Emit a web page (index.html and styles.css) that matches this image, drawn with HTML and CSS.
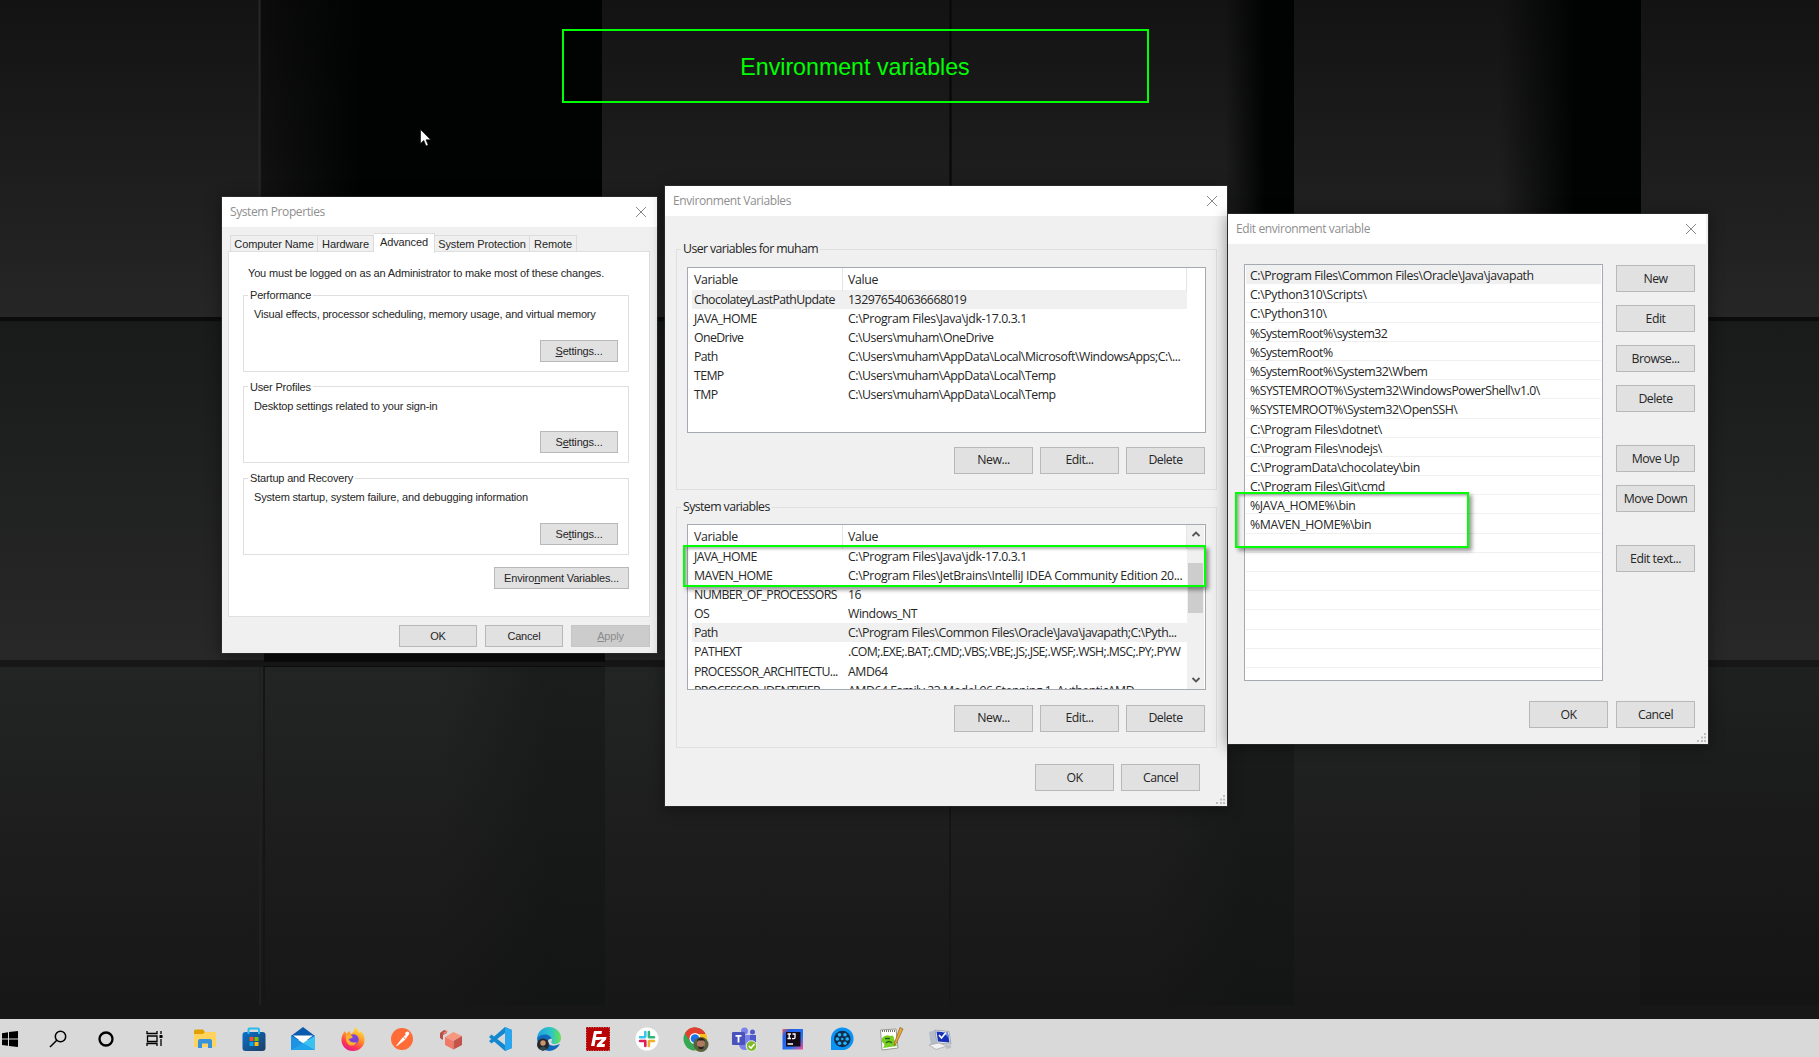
FILE: index.html
```html
<!DOCTYPE html>
<html lang="en">
<head>
<meta charset="utf-8">
<title>Environment variables</title>
<link rel="stylesheet" href="styles.css">
</head>
<body>
<div class="desktop">
<svg class="wallpaper" viewBox="0 0 1819 1019" preserveAspectRatio="none">
  <defs>
    <linearGradient id="top" x1="0" y1="0" x2="0" y2="1"><stop offset="0" stop-color="#131313"/><stop offset="1" stop-color="#262626"/></linearGradient>
    <linearGradient id="mid" x1="0" y1="0" x2="0" y2="1"><stop offset="0" stop-color="#191a1a"/><stop offset="1" stop-color="#282828"/></linearGradient>
    <linearGradient id="low" x1="0" y1="0" x2="0" y2="1"><stop offset="0" stop-color="#232424"/><stop offset=".6" stop-color="#1c1c1c"/><stop offset="1" stop-color="#171717"/></linearGradient>
    <linearGradient id="fade"><stop offset="0" stop-color="#010202" stop-opacity="0"/><stop offset="1" stop-color="#010202"/></linearGradient>
    <linearGradient id="soft"><stop offset="0" stop-color="#0c0f0e" stop-opacity="0"/><stop offset=".65" stop-color="#0c0f0e" stop-opacity=".6"/><stop offset="1" stop-color="#0e1010" stop-opacity=".65"/></linearGradient>
  </defs>
  <rect width="1819" height="1019" fill="#171717"/>
  <rect width="1819" height="318" fill="url(#top)"/>
  <rect y="322" width="1819" height="338" fill="url(#mid)"/>
  <rect y="667" width="1819" height="338" fill="url(#low)"/>
  <rect x="261" width="341" height="318" fill="#000" opacity=".4"/>
  <rect x="261" width="100" height="318" fill="url(#fade)"/>
  <rect x="361" width="241" height="318" fill="#010202"/>
  <rect x="1225" width="40" height="318" fill="url(#fade)"/>
  <rect x="1265" width="29" height="318" fill="#010202"/>
  <rect x="1500" width="75" height="318" fill="url(#fade)"/>
  <rect x="1575" width="66" height="318" fill="#010202"/>
  <rect x="264" y="653" width="341" height="14" fill="#0c0c0c"/>
  <rect x="440" y="667" width="165" height="338" fill="url(#soft)" opacity=".6"/>
  <rect x="1150" y="667" width="144" height="338" fill="url(#soft)" opacity=".6"/>
  <rect x="1640" y="667" width="179" height="338" fill="#000" opacity=".1"/>
  <rect y="317" width="1819" height="4" fill="#0c0c0c"/>
  <rect y="662" width="1819" height="4" fill="#171717"/>
  <path d="M950.500 0V318" stroke="#070707" stroke-width="2"/>
  <path d="M259.500 0V318" stroke="#262626" stroke-width="2"/>
  <path d="M264 667V1005M950 667V1005" stroke="#151515" stroke-width="2"/>
  <path d="M260 667V1005" stroke="#202020" stroke-width="2"/>
</svg>

<div class="banner">Environment variables</div>

<section class="window sysprops">
  <header class="titlebar"><span>System Properties</span><svg class="close" viewBox="0 0 12 12"><path d="M1 1L11 11M11 1L1 11"/></svg></header>
  <div class="body">
    <nav class="tabs"><span class="t1">Computer Name</span><span class="t2">Hardware</span><span class="t3 active">Advanced</span><span class="t4">System Protection</span><span class="t5">Remote</span></nav>
    <div class="panel">
      <p class="note">You must be logged on as an Administrator to make most of these changes.</p>
      <fieldset><legend>Performance</legend><p>Visual effects, processor scheduling, memory usage, and virtual memory</p><button><span><u>S</u>ettings...</span></button></fieldset>
      <fieldset><legend>User Profiles</legend><p>Desktop settings related to your sign-in</p><button><span>S<u>e</u>ttings...</span></button></fieldset>
      <fieldset><legend>Startup and Recovery</legend><p>System startup, system failure, and debugging information</p><button><span>Se<u>t</u>tings...</span></button></fieldset>
      <button class="env"><span>Enviro<u>n</u>ment Variables...</span></button>
    </div>
    <div class="actions"><button>OK</button><button>Cancel</button><button class="off"><span><u>A</u>pply</span></button></div>
  </div>
</section>

<section class="window envvars">
  <header class="titlebar"><span>Environment Variables</span><svg class="close" viewBox="0 0 12 12"><path d="M1 1L11 11M11 1L1 11"/></svg></header>
  <div class="body">
    <fieldset>
      <legend>User variables for muham</legend>
      <div class="list">
        <div class="rows">
          <div class="row head"><span>Variable</span><span>Value</span></div>
          <div class="row sel"><span>ChocolateyLastPathUpdate</span><span>132976540636668019</span></div>
          <div class="row"><span>JAVA_HOME</span><span class="wide">C:\Program Files\Java\jdk-17.0.3.1</span></div>
          <div class="row"><span>OneDrive</span><span>C:\Users\muham\OneDrive</span></div>
          <div class="row"><span>Path</span><span>C:\Users\muham\AppData\Local\Microsoft\WindowsApps;C:\...</span></div>
          <div class="row"><span>TEMP</span><span>C:\Users\muham\AppData\Local\Temp</span></div>
          <div class="row"><span>TMP</span><span>C:\Users\muham\AppData\Local\Temp</span></div>
        </div>
      </div>
      <div class="actions"><button>New...</button><button>Edit...</button><button>Delete</button></div>
    </fieldset>
    <fieldset class="system">
      <legend>System variables</legend>
      <div class="list">
        <div class="rows">
          <div class="row head"><span>Variable</span><span>Value</span></div>
          <div class="row"><span>JAVA_HOME</span><span class="wide">C:\Program Files\Java\jdk-17.0.3.1</span></div>
          <div class="row"><span>MAVEN_HOME</span><span class="wide">C:\Program Files\JetBrains\IntelliJ IDEA Community Edition 20...</span></div>
          <div class="row"><span>NUMBER_OF_PROCESSORS</span><span>16</span></div>
          <div class="row"><span>OS</span><span>Windows_NT</span></div>
          <div class="row sel"><span>Path</span><span>C:\Program Files\Common Files\Oracle\Java\javapath;C:\Pyth...</span></div>
          <div class="row"><span>PATHEXT</span><span class="tight">.COM;.EXE;.BAT;.CMD;.VBS;.VBE;.JS;.JSE;.WSF;.WSH;.MSC;.PY;.PYW</span></div>
          <div class="row"><span>PROCESSOR_ARCHITECTU...</span><span>AMD64</span></div>
          <div class="row"><span>PROCESSOR_IDENTIFIER</span><span>AMD64 Family 23 Model 96 Stepping 1, AuthenticAMD</span></div>
        </div>
        <div class="scroll">
          <svg viewBox="0 0 10 6"><path d="M1.500 5L5 1.500L8.500 5"/></svg>
          <i></i>
          <svg viewBox="0 0 10 6"><path d="M1.500 1L5 4.500L8.500 1"/></svg>
        </div>
      </div>
      <div class="actions"><button>New...</button><button>Edit...</button><button>Delete</button></div>
    </fieldset>
    <div class="actions final"><button>OK</button><button>Cancel</button></div>
  </div>
  <svg class="grip" viewBox="0 0 10 10"><path d="M7 0h2v2h-2zM4 3.500h2v2h-2zM7 3.500h2v2h-2zM0 7h2v2h-2zM4 7h2v2h-2zM7 7h2v2h-2z"/></svg>
</section>

<section class="window editvar">
  <header class="titlebar"><span>Edit environment variable</span><svg class="close" viewBox="0 0 12 12"><path d="M1 1L11 11M11 1L1 11"/></svg></header>
  <div class="body">
    <div class="columns">
      <div class="paths">
        <div class="sel">C:\Program Files\Common Files\Oracle\Java\javapath</div>
        <div>C:\Python310\Scripts\</div>
        <div>C:\Python310\</div>
        <div class="tight">%SystemRoot%\system32</div>
        <div class="tight">%SystemRoot%</div>
        <div class="tight">%SystemRoot%\System32\Wbem</div>
        <div class="tight">%SYSTEMROOT%\System32\WindowsPowerShell\v1.0\</div>
        <div class="tight">%SYSTEMROOT%\System32\OpenSSH\</div>
        <div>C:\Program Files\dotnet\</div>
        <div>C:\Program Files\nodejs\</div>
        <div>C:\ProgramData\chocolatey\bin</div>
        <div>C:\Program Files\Git\cmd</div>
        <div>%JAVA_HOME%\bin</div>
        <div>%MAVEN_HOME%\bin</div>
        <div></div><div></div><div></div><div></div><div></div><div></div><div></div>
      </div>
      <div class="side"><button>New</button><button>Edit</button><button>Browse...</button><button>Delete</button><button class="gap">Move Up</button><button>Move Down</button><button class="gap">Edit text...</button></div>
    </div>
    <div class="actions"><button>OK</button><button>Cancel</button></div>
  </div>
  <svg class="grip" viewBox="0 0 10 10"><path d="M7 0h2v2h-2zM4 3.500h2v2h-2zM7 3.500h2v2h-2zM0 7h2v2h-2zM4 7h2v2h-2zM7 7h2v2h-2z"/></svg>
</section>

<div class="mark mark-vars"></div>
<div class="mark mark-paths"></div>
<svg class="cursor" viewBox="0 0 12 18"><path d="M.5 .5V14.500L3.800 11.400L6 17L8.200 16L6 10.800H10.700Z" fill="#fff" stroke="#000" stroke-width=".6"/></svg>
</div>

<footer class="taskbar">
  <svg class="start" viewBox="0 0 26 26"><path d="M5 7.200L11 6.300V12.500H5zM12 6.100L21 5V12.500H12zM5 13.500H11V19.800L5 18.900zM12 13.500H21V21L12 19.900z"/></svg>
  <svg viewBox="0 0 26 26"><g fill="none" stroke="#000" stroke-width="1.500"><circle cx="15.500" cy="10.500" r="5.200"/><path d="M11.800 14.200L5 21"/></g></svg>
  <svg viewBox="0 0 26 26"><circle cx="13" cy="13" r="6.500" fill="none" stroke="#000" stroke-width="2.300"/></svg>
  <svg viewBox="0 0 26 26"><g fill="none" stroke="#000" stroke-width="1.300"><path d="M5 5V7.500H15V5M5 20V17.500H15V20M5.500 10H15V15.500H5.500zM19 5V8M19 13V20"/></g><path d="M17.500 9h3v3h-3z"/></svg>
  <svg viewBox="0 0 26 26"><path d="M2 5q0-1.500 1.500-1.500H11l2 2.500v5H2z" fill="#e0a100"/><path d="M2 8H11L13 6H24V21H2z" fill="#ffd35c"/><path d="M6 22V15q0-2 2-2H18q2 0 2 2V22H16V17.500H10V22z" fill="#3794dc"/></svg>
  <svg viewBox="0 0 26 26"><defs><linearGradient id="st" x1="0" y1="0" x2="1" y2="1"><stop stop-color="#0872ca"/><stop offset="1" stop-color="#1e3c64"/></linearGradient></defs><rect x="1.500" y="6" width="23" height="19" rx="3" fill="url(#st)"/><path d="M7.500 8V3.500Q7.500 2.500 8.500 2.500H17Q18 2.500 18 3.500V8" fill="none" stroke="#28bbef" stroke-width="2"/><path d="M8.500 11H12.500V15H8.500z" fill="#f35325"/><path d="M13.500 11H17.500V15H13.500z" fill="#81bc06"/><path d="M8.500 16H12.500V20H8.500z" fill="#05a6f0"/><path d="M13.500 16H17.500V20H13.500z" fill="#ffba08"/></svg>
  <svg viewBox="0 0 26 26"><path d="M1 10L13 1L25 10V14H1z" fill="#0a5aad"/><path d="M1 9.500L13 17L25 24H1z" fill="#1e93e4"/><path d="M13 17L25 9.500V24z" fill="#39c1f2"/><path d="M13 17L25 24H1z" fill="#22a4ea"/><path d="M3 9.500L13 17L23 9.500z" fill="#fff"/></svg>
  <svg viewBox="0 0 26 26"><defs><linearGradient id="ff" x1=".8" y1="0" x2=".3" y2="1"><stop stop-color="#fff04a"/><stop offset=".45" stop-color="#ff9225"/><stop offset=".75" stop-color="#ff3b50"/><stop offset="1" stop-color="#e3168b"/></linearGradient></defs><path d="M13 25C6 25 1.500 20 1.500 14C1.500 10 3 7 5 5L6.500 8Q8 5.500 10 5L10.500 8Q14 7 15 1Q18 3 19.500 7L21 5Q25 9 24.500 14.500C24.500 20 19.500 25 13 25z" fill="url(#ff)"/><circle cx="13.500" cy="13.500" r="5.200" fill="#7a45d6"/><path d="M6 9Q10 7.500 13 11Q11 13 8.500 13Q11 18 17 16Q14 21 9 19Q5 16 6 9z" fill="#ffb02e"/></svg>
  <svg viewBox="0 0 26 26"><circle cx="13" cy="13" r="11" fill="#ff6c37"/><path d="M7 20L14 11L16.500 13.500L8 20zM14.500 10.500L18 8L19 9.500L16.800 13z" fill="#fff"/><circle cx="18.300" cy="7.500" r="2" fill="#fff"/></svg>
  <svg viewBox="0 0 26 26"><path d="M2 7L6 4L9 5V7L5 9V14L2 12z" fill="#b85045"/><path d="M5 7L9.500 4.500V6L6 8z" fill="#f48c75"/><path d="M7 11L15.500 6L24 10L15.500 15z" fill="#f7977f"/><path d="M7 11L15.500 15V23.500L7 19z" fill="#f07a67"/><path d="M24 10L15.500 15V23.500L24 19z" fill="#c4544b"/></svg>
  <svg viewBox="0 0 26 26"><path d="M18 1L25 4V22L18 25L2 11L4.500 8.500L18 19V7L4.500 17.500L2 15z" fill="#1388cf"/><path d="M18 1L25 4V22L18 25z" fill="#2aa6ee"/></svg>
  <svg viewBox="0 0 26 26"><defs><linearGradient id="ed"><stop stop-color="#1d9fe5"/><stop offset=".6" stop-color="#2dc7c5"/><stop offset="1" stop-color="#6be04c"/></linearGradient></defs><path d="M1 12C2 5 7 1 13 1C21 1 25 7 25 12C25 16 22 18 18.500 18C15 18 15 16 16 14C16 9 8 7 1 12z" fill="url(#ed)"/><path d="M1 12C7 6 15 9 16 13C14 12 11 14 12 17Q15 22 24 18Q20 25 13 25Q2 24 1 12z" fill="#1269bb"/><circle cx="7" cy="18.500" r="6" fill="#25282a"/><circle cx="7" cy="17" r="2.700" fill="#c8946e"/><path d="M3 23Q7 18 11 23L7 25z" fill="#334a50"/></svg>
  <svg viewBox="0 0 26 26"><rect x="1.500" y="1.500" width="23" height="23" fill="#b90404" stroke="#a00" stroke-dasharray="1.500 1"/><path d="M6 20L9 5H17L16.500 8H11.500L11 11H15L14.500 14H10.500L9.500 20zM14 11H21.500L21 13.500L16.500 18H20L19.500 21H11.500L12 18.500L16.800 13.500H13.500z" fill="#fff"/></svg>
  <svg viewBox="0 0 26 26"><circle cx="13" cy="13" r="11.500" fill="#fff"/><g stroke-width="2.600" stroke-linecap="round"><path d="M11.300 6V10.500M6 11.300H10.500" stroke="#36c5f0"/><path d="M14.900 6V11M15 11.300H20" stroke="#2eb67d"/><path d="M14.900 15.300V20M15.300 15H20" stroke="#ecb22e"/><path d="M11.300 15V20M6 15H11" stroke="#e01e5a"/></g></svg>
  <svg viewBox="0 0 26 26"><circle cx="12" cy="13" r="11.500" fill="#34a853"/><path d="M2 7.500A11.500 11.500 0 0 1 23 9H12L7 15z" fill="#e43e2f"/><path d="M12 8H23A11.500 11.500 0 0 1 12 24.500L17 14z" fill="#fbc116"/><circle cx="12" cy="12.500" r="5.500" fill="#fff"/><circle cx="12" cy="12.500" r="4.300" fill="#1a73e8"/><circle cx="18" cy="18.500" r="7.500" fill="#59603f"/><circle cx="18" cy="17.500" r="4" fill="#ad7962"/><path d="M14 16Q14 12 18 12Q22 12 22 16L21 14.500H15zM15 20Q18 22 21 20L20 23H16z" fill="#29221f"/></svg>
  <svg viewBox="0 0 26 26"><circle cx="13.500" cy="5" r="3.500" fill="#7b83eb"/><circle cx="21.500" cy="6" r="2.500" fill="#5059c9"/><path d="M17 9H25V16Q25 20 21 20H17z" fill="#5059c9"/><path d="M8 9H19V18Q19 24 13.500 24Q9 24 8 19z" fill="#7b83eb"/><rect x="1" y="6" width="13" height="13" rx="1" fill="#4a53bc"/><path d="M4.500 9H10.500V10.700H8.400V16.500H6.600V10.700H4.500z" fill="#fff"/><circle cx="20.500" cy="20" r="5.300" fill="#7fba25" stroke="#eee"/><path d="M17.800 20L20 22L23.500 18" fill="none" stroke="#fff" stroke-width="1.600"/></svg>
  <svg viewBox="0 0 26 26"><defs><linearGradient id="ij" x1="0" y1="0" x2="1" y2="1"><stop stop-color="#ff5a44"/><stop offset=".2" stop-color="#245ee8"/><stop offset=".65" stop-color="#2574f4"/><stop offset="1" stop-color="#f94a89"/></linearGradient></defs><path d="M2.500 3H23V23.500H2.500z" fill="url(#ij)"/><path d="M6 6H20.500V20.500H6z" fill="#140a18"/><path d="M7.500 8H11M9.200 8V12.500M7.500 12.500H11M12.500 8H15V11.500Q15 12.700 13.500 12.700H12M7.500 18H13" fill="none" stroke="#fff" stroke-width="1.300"/></svg>
  <svg viewBox="0 0 26 26"><path d="M2 24V13A11.300 11.300 0 1 1 13.300 24z" fill="#0b92f5"/><circle cx="13.300" cy="13" r="8.300" fill="#112d4e"/><g fill="#20b6ff"><circle cx="13.300" cy="13" r="1.200"/><circle cx="10.500" cy="8.700" r="1.800"/><circle cx="16" cy="8.700" r="1.800"/><circle cx="8.300" cy="13" r="1.800"/><circle cx="18.200" cy="13" r="1.800"/><circle cx="10.500" cy="17.300" r="1.800"/><circle cx="16" cy="17.300" r="1.800"/></g></svg>
  <svg viewBox="0 0 26 26"><path d="M2.500 4L18 3L20 22L4 24z" fill="#fff" stroke="#9a9a93"/><path d="M4 5H17" stroke="#777" stroke-width="2" stroke-dasharray="1 1"/><path d="M4 12Q8 8 12 10Q16 8 16 13L19 20L5 22Q8 18 4 16z" fill="#79cf25"/><path d="M7 12.500h5M8 17q3-3 6 0" stroke="#285f14" fill="none" stroke-width="1.400"/><path d="M22 1.500L25 3L18 18L16 19.500L16.500 16.500z" fill="#efa62d" stroke="#7b5323" stroke-width=".6"/></svg>
  <svg viewBox="0 0 26 26"><path d="M2 6L9 4V19L4 20z" fill="#b4bdc8"/><path d="M8 4L22 5.500L24 18L10 17z" fill="#e7ebef" stroke="#7c8491" stroke-width=".6"/><path d="M9.500 5.500L20.800 6.600L22.500 16.500L11 15.500z" fill="#1830b5"/><path d="M15 6L21 7L22 12z" fill="#5f88ea"/><path d="M12 9L14.500 12L19 6.500" stroke="#fff" stroke-width="1.600" fill="none"/><path d="M2 19L12 17L20 20L9 23.500z" fill="#f2f2f2" stroke="#999" stroke-width=".6"/><path d="M19 19L24 19.500V22L19 23z" fill="#babfc7"/></svg>
</footer>
</body>
</html>
```
FILE: styles.css
```css
* { box-sizing: border-box; }
body { margin: 0; width: 1819px; height: 1057px; overflow: hidden; background: #171717; font: 12.3px/19.200px "Open Sans", sans-serif; color: #262626; }
p { margin: 0; }
svg { display: block; }
.desktop { position: relative; height: 1019px; overflow: hidden; }
.wallpaper { width: 1819px; height: 1019px; }

.banner { position: absolute; left: 562px; top: 29px; width: 587px; height: 74px; border: 2px solid #0f0; color: #0f0; font: 23.2px/73px "Liberation Sans", sans-serif; text-align: center; padding-right: 1px; }

.window { position: absolute; background: #f0f0f0; box-shadow: 0 2px 14px 1px rgba(0,0,0,.4), 0 0 0 1px rgba(70,70,70,.5); }
.titlebar { height: 30px; background: #fff; color: #8f8f8f; display: flex; justify-content: space-between; align-items: center; font-size: 12px; letter-spacing: -.4px; }
.close { width: 12px; height: 12px; fill: none; stroke: #888; stroke-width: 1; }
button { font: inherit; color: inherit; margin: 0; padding: 0; border: 1px solid #b8b8b8; background: #e1e1e1; width: 79px; height: 27px; line-height: 24px; text-align: center; white-space: nowrap; flex: none; letter-spacing: -.5px; }
fieldset { margin: 0; padding: 0; border: 1px solid #dfdfdf; min-width: 0; }
legend { height: 16px; line-height: 16px; padding: 0 2px 0 2px; margin-left: 4px; }
.actions { display: flex; justify-content: flex-end; gap: 7px; }
.grip { position: absolute; right: 1px; bottom: 1px; width: 10px; height: 10px; fill: #bdbdbd; }

.sysprops { left: 222px; top: 197px; width: 435px; height: 456px; }
.sysprops .titlebar { padding: 0 10px 0 8px; }
.sysprops .body { padding: 5px 7px 0 6px; font: 11px/16px "Liberation Sans", sans-serif; letter-spacing: -.17px; }
.tabs { display: flex; align-items: flex-end; height: 20px; padding-left: 2px; }
.tabs span { height: 17px; border: 1px solid #dcdcdc; border-bottom: 0; border-left-width: 0; text-align: center; line-height: 17px; white-space: nowrap; letter-spacing: -.1px; }
.tabs .t1 { width: 88px; border-left-width: 1px; }
.t2 { width: 56px; }
.t3 { width: 61px; }
.t4 { width: 95px; }
.t5 { width: 47px; }
.tabs .active { height: 20px; background: #fff; margin-bottom: -1px; line-height: 17px; }
.panel { height: 366px; background: #fff; border: 1px solid #dfdfdf; padding: 13px 20px 0 14px; margin-top: -1px; }
.panel .note { padding-left: 5px; }
.panel fieldset { height: 84.500px; margin: 7px 0 6.500px; }
.panel .note + fieldset { margin-top: 6px; }
.panel fieldset p { padding: 3px 0 0 10px; }
.panel fieldset button { display: block; margin: 17.500px 10px 0 auto; }
.sysprops button { width: 78px; height: 22px; line-height: 20px; letter-spacing: -.17px; }
.sysprops .panel .env { display: block; width: 135px; margin: 12px 0 0 auto; }
.sysprops .actions { padding-top: 8px; gap: 8px; }
.sysprops .off { background: #ccc; border-color: #c6c6c6; color: #8b8b8b; width: 79px; }

.envvars { left: 665px; top: 186px; width: 562px; height: 620px; }
.envvars .titlebar { padding: 0 9px 0 8px; }
.envvars .body { padding: 25px 10px 0 11px; display: flex; flex-direction: column; gap: 9px; }
.envvars fieldset { height: 249px; padding: 0 10px; }
.envvars fieldset legend { margin-left: -6px; letter-spacing: -.58px; }
.list { margin-top: 9.500px; width: 519px; height: 166px; border: 1px solid #a5a9b2; background: #fff; display: flex; overflow: hidden; }
.system .list { margin: 8.500px 0 15px; }
.rows { width: 496px; padding-left: 4px; margin-right: 4px; flex: none; }
.row { display: grid; grid-template-columns: 151px 344px; height: 19.200px; width: 495px; white-space: nowrap; letter-spacing: -.46px; }
.row span { padding-left: 2px; }
.row span:first-child { letter-spacing: -.6px; }
.row span + span { padding-left: 5px; }
.row .wide { letter-spacing: -.38px; }
.row .tight { letter-spacing: -.58px; }
.row.head { height: 22px; line-height: 24px; }
.row.head span { border-right: 1px solid #e5e5e5; letter-spacing: -.35px; }
.sel { background: #f0f0f0; }
.scroll { width: 17px; height: 164px; background: #f0f0f0; flex: none; display: grid; grid-template-rows: 38px 50px 1fr; justify-items: center; margin-left: -1px; }
.scroll svg { width: 10px; height: 6px; margin-top: 6px; fill: none; stroke: #555; stroke-width: 1.800; }
.scroll i { width: 15px; background: #cdcdcd; }
.scroll svg:last-child { align-self: end; margin-bottom: 6px; }
.envvars fieldset .actions { margin: 14px 1px 0 0; }
.envvars .system .actions { margin-top: 0; }
.envvars .final { padding: 7px 17px 0 0; }

.editvar { left: 1228px; top: 214px; width: 480px; height: 530px; }
.editvar .titlebar { padding: 0 9px 0 8px; width: 478px; }
.editvar .body { padding: 20px 13px 0 16px; }
.columns { display: flex; justify-content: space-between; height: 417px; }
.paths { width: 359px; height: 417px; border: 1px solid #a5a9b2; background: #fff; overflow: hidden; padding-left: 1px; }
.paths div { height: 19.200px; border-bottom: 1px solid #f0f0f0; padding-left: 4px; line-height: 21px; letter-spacing: -.38px; white-space: pre; margin-right: 1px; }
.paths .tight { letter-spacing: -.49px; }
.side { display: flex; flex-direction: column; gap: 13px; padding-top: 1px; }
.side .gap { margin-top: 20px; }
.editvar .actions { margin-top: 20px; gap: 8px; }

.mark { position: absolute; border: 2px solid #0f0; box-shadow: 3px 3px 4px rgba(0,0,0,.4), inset 2px 2px 3px rgba(0,0,0,.3); }
.mark-vars { left: 683px; top: 545px; width: 523px; height: 42px; }
.mark-paths { left: 1235px; top: 492px; width: 234px; height: 56px; }
.cursor { position: absolute; left: 420px; top: 129px; width: 12px; height: 18px; }

.taskbar { height: 38px; background: #d9d9d9; display: grid; grid-template-columns: 34px 48px 48px 49px 51px 48px 50.500px repeat(13, 48.950px); align-items: center; justify-items: center; }
.taskbar svg { width: 26px; height: 26px; margin-top: 2px; }
.taskbar .start { margin-left: -14px; }
```
